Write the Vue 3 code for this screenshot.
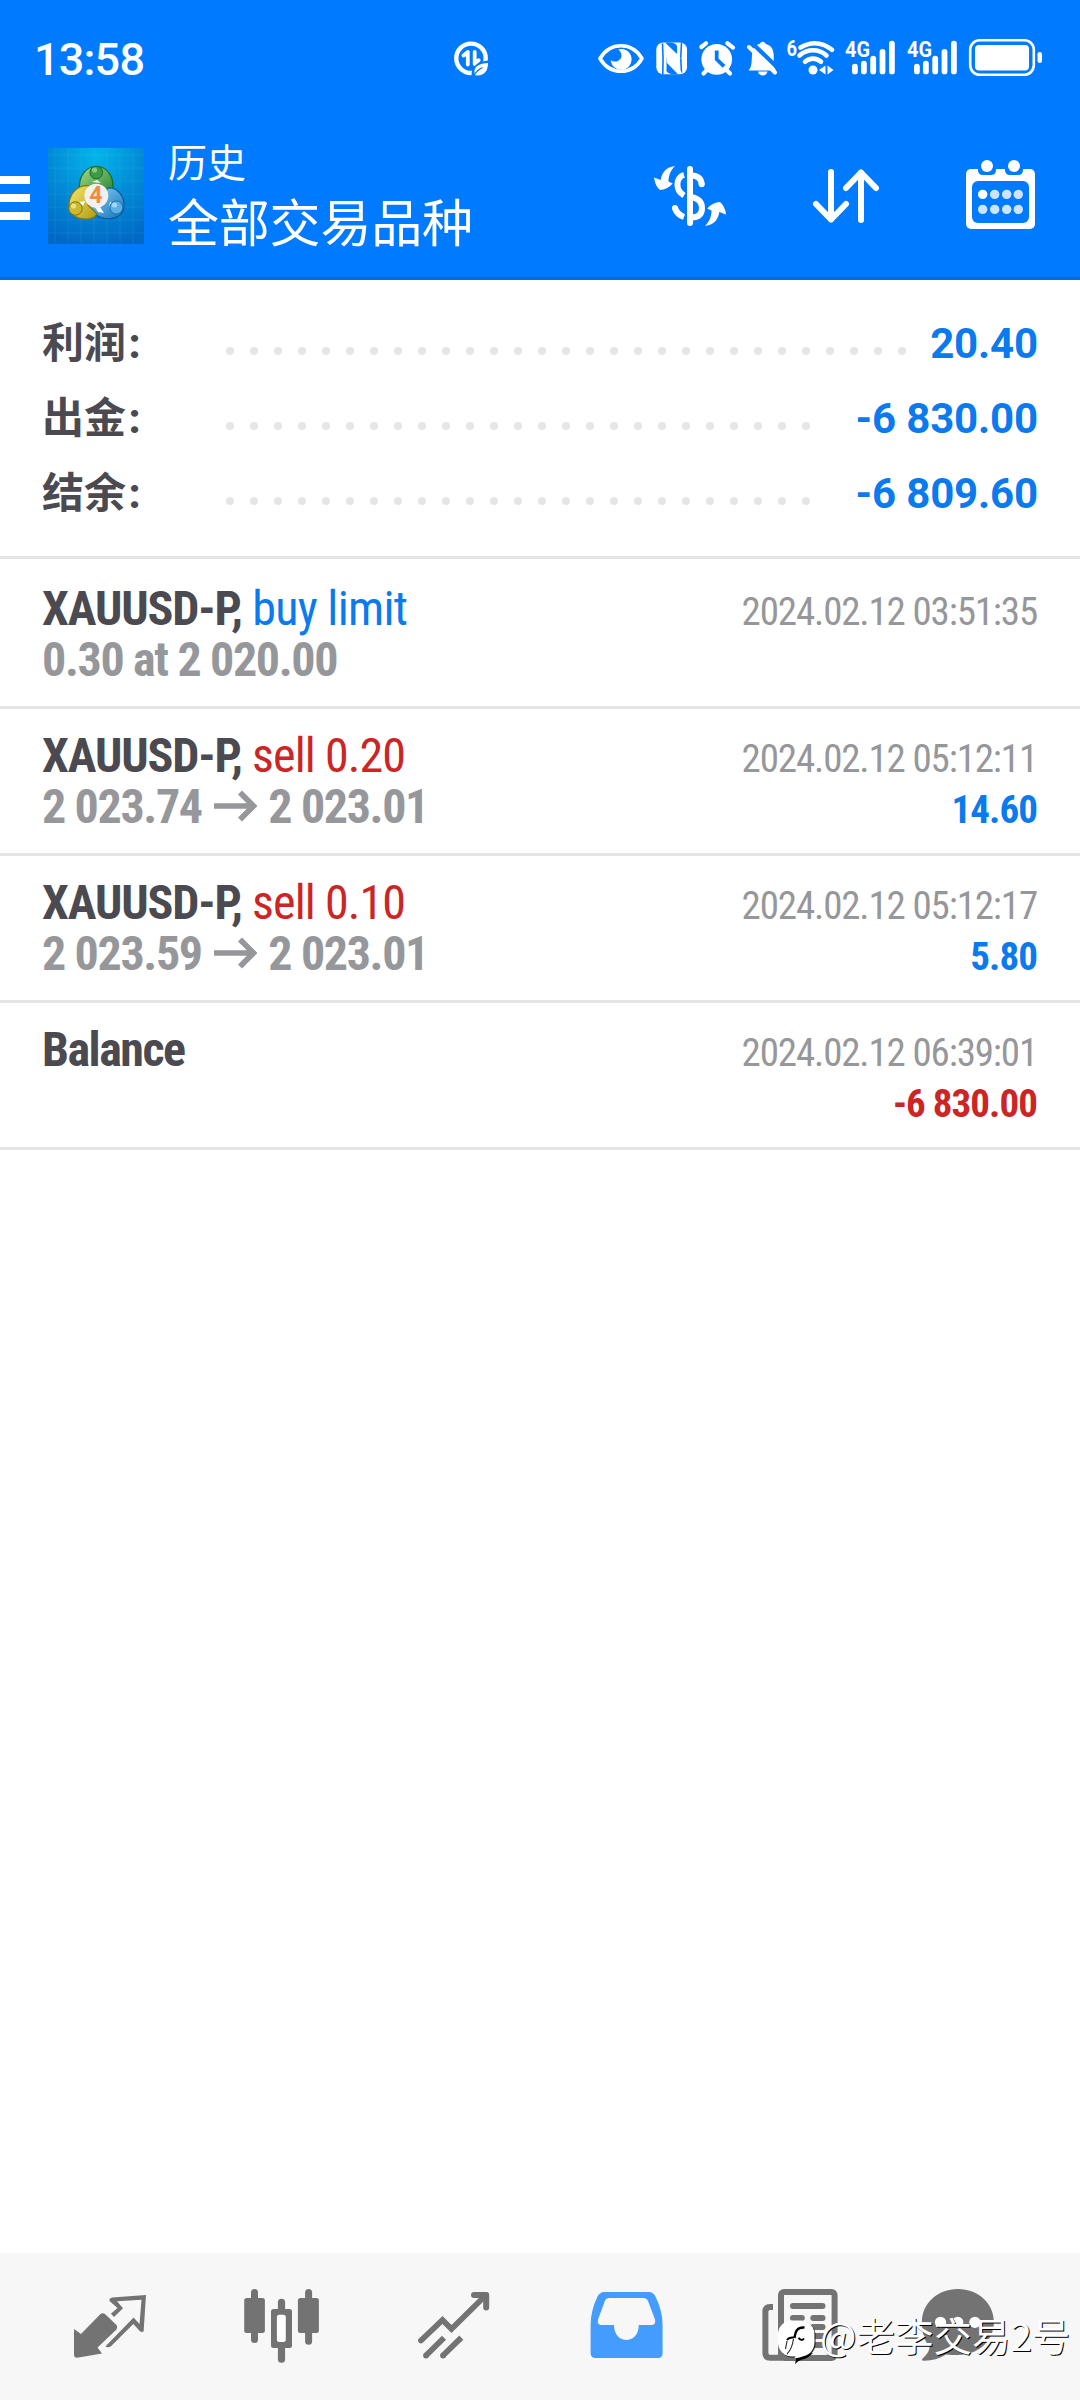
<script setup>
const summary = [
  { label: '利润', value: '20.40', dots: 29 },
  { label: '出金', value: '-6 830.00', dots: 25 },
  { label: '结余', value: '-6 809.60', dots: 25 },
]

const deals = [
  { symbol: 'XAUUSD-P,', action: 'buy limit', side: 'buy', from: '0.30 at 2 020.00', time: '2024.02.12 03:51:35' },
  { symbol: 'XAUUSD-P,', action: 'sell 0.20', side: 'sell', from: '2 023.74', to: '2 023.01', time: '2024.02.12 05:12:11', profit: '14.60' },
  { symbol: 'XAUUSD-P,', action: 'sell 0.10', side: 'sell', from: '2 023.59', to: '2 023.01', time: '2024.02.12 05:12:17', profit: '5.80' },
  { symbol: 'Balance', plain: true, time: '2024.02.12 06:39:01', profit: '-6 830.00', loss: true },
]

const bars = [
  { x: 852, y: 63.7 },
  { x: 861, y: 60.7 },
  { x: 870.3, y: 55.7 },
  { x: 879.6, y: 49 },
  { x: 889, y: 40.7 },
]

const calendarDots = [22.7, 34.7, 46.7, 58.3]
</script>

<template>
  <div class="screen">
    <header class="top">
      <div class="status">
        <span class="clock">13:58</span>
        <svg class="saver" width="36" height="36" viewBox="453 40 36 36">
          <circle cx="471" cy="58.3" r="14.7" fill="none" stroke="#fff" stroke-width="4.4" />
          <path d="M463.5 55.5 L467.8 52 V64.5 M474.7 52 V64 L478.7 60.2" fill="none" stroke="#fff" stroke-width="3.8" stroke-linecap="round" stroke-linejoin="round" />
          <path d="M471.500 78 C470.500 66 478 60.500 491 60.500 V78 Z" fill="#007aff" />
          <path d="M475 75.300 C472.500 67 478 63.800 488 63 C488 71 484 76.500 475 75.300Z" fill="#fff" />
          <path d="M474 75.500 Q477 70 482.500 67.500" fill="none" stroke="#007aff" stroke-width="1.300" />
        </svg>
        <svg class="tray" width="450" height="46" viewBox="596 35 450 46">
          <path d="M600 58.500 C610 41.500 632 41.500 642 58.500 C632 75.500 610 75.500 600 58.500Z" fill="none" stroke="#fff" stroke-width="3.600" stroke-linejoin="round" />
          <path d="M618 49.500 A10.400 10.400 0 1 1 610.800 60 C614 63 621 61.500 621.500 56 C621.500 53 620 50.500 618 49.500Z" fill="#fff" />
          <rect x="656.300" y="42.500" width="30.700" height="31.800" rx="7" fill="#fff" />
          <path d="M662.500 43.500 Q663.500 58 662.800 74 M681.500 42.500 Q680 58 681.500 73" fill="none" stroke="#007aff" stroke-width="1.600" />
          <path d="M666.500 55.500 V71 Q667.500 73.500 672.500 74.300 L678 74.300 L667 63Z M665 42.500 L677 54 V46 Q676 43 671 42.500Z" fill="#007aff" />
          <path d="M664.500 44 L680 59 M664.500 52 L681 73" stroke="#fff" stroke-width="2" />
          <circle cx="716.700" cy="59.300" r="15.400" fill="#fff" />
          <path d="M701.300 47 L706 43.300 M727.300 43.300 L733 47.600 M703.500 73.500 L709 68 M730 73.500 L724.500 68" stroke="#fff" stroke-width="4.200" stroke-linecap="round" />
          <path d="M716.700 50.500 V59.300 L724 66.300" fill="none" stroke="#007aff" stroke-width="3.800" />
          <path d="M748.500 70.500 C752 66.500 751.500 62 752 55 C752.500 48 756 44.500 759.500 44 Q762.700 39.500 766 44 C771 45.500 773.500 49 773.700 55 V66 L776 70.500Z" fill="#fff" />
          <path d="M758 71.500 H767.500 Q766.500 75.500 762.700 75.500 Q759 75.500 758 71.500Z" fill="#fff" />
          <path d="M752 43 L780 70" stroke="#007aff" stroke-width="4.200" />
          <path d="M749 47 L775 72.500" stroke="#fff" stroke-width="4" stroke-linecap="round" />
          <text x="786.500" y="56" class="tray-text" textLength="10.500" lengthAdjust="spacingAndGlyphs">6</text>
          <circle cx="813" cy="70" r="4.500" fill="#fff" />
          <path d="M805 61.800 A11.700 11.700 0 0 1 821 61.800 M799.500 55.500 A20 20 0 0 1 826.500 55.500 M800.500 47.500 Q817 38 832 49.800" fill="none" stroke="#fff" stroke-width="4.600" stroke-linecap="round" />
          <path d="M825.500 65.500 V74.500 L819 70Z M827.500 65.500 V74.500 L833.500 70Z" fill="#fff" />
          <g v-for="shift in [0, 62]" :key="shift" :transform="`translate(${shift} 0)`">
            <text x="845" y="57" class="tray-text" textLength="25" lengthAdjust="spacingAndGlyphs">4G</text>
            <rect v-for="bar in bars" :key="bar.x" :x="bar.x" :y="bar.y" width="5.800" :height="74.300 - bar.y" rx="2.900" fill="#fff" />
          </g>
          <rect x="970.200" y="40.200" width="63.600" height="34.600" rx="9.500" fill="none" stroke="#fff" stroke-width="2.600" />
          <rect x="975" y="45" width="54" height="25.500" rx="4" fill="#fff" />
          <rect x="1037.500" y="52" width="4.500" height="11" rx="2.200" fill="#fff" />
        </svg>
      </div>

      <div class="toolbar">
        <div class="menu"><i></i><i></i><i></i></div>
        <svg class="logo" width="96" height="96" viewBox="0 0 96 96">
          <defs>
            <radialGradient id="sky" cx="50%" cy="8%" r="95%">
              <stop offset="0" stop-color="#04b5ea" />
              <stop offset=".5" stop-color="#028bd5" />
              <stop offset="1" stop-color="#0268c6" />
            </radialGradient>
            <linearGradient id="green" x1="0" y1="0" x2="1" y2="1">
              <stop offset="0" stop-color="#a4dc8a" /><stop offset="1" stop-color="#21802c" />
            </linearGradient>
            <linearGradient id="gold" x1="0" y1="0" x2="1" y2="1">
              <stop offset="0" stop-color="#f4ea6a" /><stop offset="1" stop-color="#b39a14" />
            </linearGradient>
            <linearGradient id="azure" x1="0" y1="0" x2="1" y2="1">
              <stop offset="0" stop-color="#8fd4f6" /><stop offset="1" stop-color="#1273ba" />
            </linearGradient>
          </defs>
          <rect width="96" height="96" fill="url(#sky)" />
          <path d="M7 0V96M20 0V96M33 0V96M46 0V96M59 0V96M72 0V96M85 0V96M0 7H96M0 20H96M0 33H96M0 46H96M0 59H96M0 72H96M0 85H96" stroke="#5cc4f0" stroke-opacity=".14" stroke-width="1" />
          <path d="M31.500 43 C30 28 38 18.500 48.500 18.500 C60 18.500 67 30 64.500 44 L57 49 H40Z" fill="url(#green)" stroke="#17692a" stroke-width="1.200" />
          <path d="M60 40 C70 39 77 49 76 59 C75 70 62 73 52 69 C44 66 41 61 40 58 L52 52Z" fill="url(#azure)" stroke="#075c9e" stroke-width="1.200" />
          <path d="M42 38 C30 36 22 45 21 56 C20 66 28 71 38 71 Q46 71 49 66 L40 57Z" fill="url(#gold)" stroke="#84750e" stroke-width="1.200" />
          <path d="M46 58 L52 59 L56 65 L50 64Z M35 58 L31 54 L37 53Z M62 54 L66 56 L61 59Z M44 34 L49 32 L53 35Z" fill="#f2fbff" />
          <circle cx="48.300" cy="24.500" r="6.300" fill="#3f9a45" stroke="#1c6b2a" />
          <circle cx="27.500" cy="60.500" r="6.700" fill="#cbb930" stroke="#83720d" />
          <circle cx="68.300" cy="59.500" r="6.500" fill="#58b0e6" stroke="#1b6fae" />
          <circle cx="46.500" cy="22" r="2.600" fill="#a9dba0" opacity=".7" />
          <circle cx="25.500" cy="58" r="2.600" fill="#f6ef9a" opacity=".7" />
          <circle cx="66.500" cy="57" r="2.600" fill="#c5e7fa" opacity=".7" />
          <circle cx="48.300" cy="47.700" r="12" fill="#f3f1ef" />
          <text x="47.800" y="55.300" class="logo-text" text-anchor="middle">4</text>
        </svg>
        <div class="titles">
          <div class="subtitle">历史</div>
          <div class="title">全部交易品种</div>
        </div>
        <svg width="84" height="72" viewBox="0 0 84 72">
          <g fill="#fff">
            <rect x="39" y="6" width="6" height="60" rx="3" />
            <path d="M27 6 C17 7 13.500 14 12.700 20 L6 17.500 Q7 26 12 30 Q19 30 24.700 23.500 L20.500 21.500 C20.500 15 23 10 27 6Z" />
            <path d="M27 6 C17 7 13.500 14 12.700 20 L6 17.500 Q7 26 12 30 Q19 30 24.700 23.500 L20.500 21.500 C20.500 15 23 10 27 6Z" transform="rotate(180 42 36)" />
          </g>
          <g fill="none" stroke="#fff" stroke-width="6">
            <path d="M36 14.800 C28 17 26.500 30 36 35.500 M36 57 Q29 54.500 27 48" />
            <path d="M44 15.500 Q53 16 53.700 24.300 M44 37.200 Q54 39.500 54 48 Q54 57 44 57.500" />
          </g>
          <circle cx="53.700" cy="24.300" r="3" fill="#fff" /><circle cx="27" cy="48" r="3" fill="#fff" />
        </svg>
        <svg class="sort" width="78" height="66" viewBox="0 0 78 66">
          <path d="M24 9 V56.500 M9 41 L24 56.500 L39 41 M54 57 V9.500 M39 25 L54 9.500 L69 25" fill="none" stroke="#fff" stroke-width="6" stroke-linecap="round" stroke-linejoin="round" />
        </svg>
        <svg class="calendar" width="81" height="81" viewBox="0 0 81 81">
          <rect x="6" y="15" width="69" height="60" rx="5" fill="#fff" />
          <rect x="12" y="27" width="57" height="42" rx="6" fill="#007aff" />
          <g v-for="x in [27, 54]" :key="x">
            <path :d="`M${x - 9} 12 h18 v4 q0 5 -5 5 h-8 q-5 0 -5 -5Z`" fill="#007aff" />
            <circle :cx="x" cy="12" r="6" fill="#fff" />
          </g>
          <g v-for="(x, i) in calendarDots" :key="x">
            <circle :cx="x" cy="40.400" r="4.700" :fill="i ? '#cce4ff' : '#fff'" />
            <circle :cx="x" cy="55.400" r="4.700" fill="#cce4ff" />
          </g>
        </svg>
      </div>
    </header>

    <section class="summary">
      <div v-for="row in summary" :key="row.label" class="sum-row">
        <span class="sum-label">{{ row.label }}<span class="colon">:</span></span>
        <span class="leader"><i v-for="n in row.dots" :key="n"></i></span>
        <span class="sum-value">{{ row.value }}</span>
      </div>
    </section>

    <main class="deals">
      <article v-for="deal in deals" :key="deal.time" class="deal">
        <div class="left">
          <div class="line" :class="{ plain: deal.plain }"><b>{{ deal.symbol }}</b><span v-if="deal.action" :class="deal.side">{{ ' ' + deal.action }}</span></div>
          <div v-if="deal.from" class="line prices">
            <span>{{ deal.from }}</span>
            <template v-if="deal.to">
              <svg width="43" height="32" viewBox="0 0 43 32"><path d="M0 16 H39 M26 2.500 L39.500 16 L26 29.500" fill="none" stroke="#96979b" stroke-width="5.700" /></svg>
              <span>{{ deal.to }}</span>
            </template>
          </div>
        </div>
        <div class="right">
          <div class="time">{{ deal.time }}</div>
          <div v-if="deal.profit" class="profit" :class="{ loss: deal.loss }">{{ deal.profit }}</div>
        </div>
      </article>
    </main>

    <nav class="tabs">
      <svg width="172" height="147" viewBox="0 0 172 147" fill="#737373">
        <path d="M50 76 L57 81 L76.500 61 Q79 59.300 81.500 61.500 L92.500 72 Q94 74 92.500 76.500 L73.500 94.500 L78 100.500 L53 104.700 Q50 104.700 50 101.500Z" />
        <path d="M85.500 46.300 Q86 45 88 44.500 L122 42 L119.600 78.700 H116.500 L109.300 71 L87 93.200 Q84 95 81.400 93.500 L109.600 64.500 L115.500 71 L117.500 46.700 L93 48.300 L99 55.300 L90 64 L86.900 60.700 L93.500 55 L85.500 48Z" />
      </svg>
      <svg width="172" height="147" viewBox="0 0 172 147" fill="#737373">
        <rect x="55" y="36" width="7" height="54" rx="3.500" />
        <rect x="48.200" y="45" width="20.700" height="35" rx="2.500" />
        <rect x="81.900" y="45.700" width="7.200" height="64" rx="3.500" />
        <rect x="75" y="56" width="21" height="39" rx="2.500" />
        <rect x="80.900" y="61.700" width="8.900" height="27.300" rx="2.500" fill="#fff" />
        <rect x="109.100" y="36" width="7" height="55.700" rx="3.500" />
        <rect x="101.900" y="45" width="21" height="35" rx="2.500" />
      </svg>
      <svg width="172" height="147" viewBox="0 0 172 147" fill="none" stroke="#737373" stroke-width="5.800">
        <path d="M53 87.500 L74.500 67 L83.500 76 L118 42" stroke-linecap="round" />
        <path d="M106 42 H118.200 V54.500" stroke-width="6" stroke-linecap="round" stroke-linejoin="round" />
        <path d="M58 102.500 L76 84.700 M75 102.500 L93.300 84.700" />
        <path d="M58 102.500 h.01 M75 102.500 h.01" stroke-linecap="round" />
      </svg>
      <svg width="172" height="147" viewBox="0 0 172 147">
        <path fill-rule="evenodd" fill="#449cff" d="M64 39 H109 Q113 39 115.500 43.500 Q122.600 58 122.600 72 V100 Q122.600 105 118 105 H55.500 Q50.600 105 50.600 100 V72 Q50.600 58 57.500 43.500 Q60 39 64 39Z M69.500 45 Q66 45 64.800 48 L58 66.500 Q57 71.700 61 72 H74 C74 92 98.800 92 98.800 72 H112 Q116 71.700 115 66.500 L108 48 Q106.800 45 103 45Z" />
      </svg>
      <svg width="172" height="147" viewBox="0 0 172 147" fill="none" stroke="#737373" stroke-width="6">
        <rect x="69" y="39" width="53.600" height="66" rx="3" />
        <path d="M61 54 H58 Q53.400 54 53.400 58.500 V100 Q53.400 104.800 58 104.800 H70" />
        <path d="M81 53 H110.500 M101.300 65 H110.500 M101.300 74 H110.500 M81 65 H89.800 M81 74 H89.800 M81 83 H110.500 M81 92 H110.500" stroke-linecap="round" />
      </svg>
      <svg width="172" height="147" viewBox="0 0 172 147" fill="#737373">
        <path d="M73.900 36 C94 36 109.900 50 109.900 69 C109.900 88 94 102 73.900 102 Q68 102 62 101.500 Q52 108 39 107.700 Q37 107 39 105 Q46 99 45.500 93 C40 88 37.900 79 37.900 69 C37.900 50 54 36 73.900 36Z" />
        <g fill="#fff"><circle cx="56.500" cy="69.300" r="5.600" /><circle cx="73.700" cy="69.300" r="5.600" /><circle cx="90.900" cy="69.300" r="5.600" /></g>
      </svg>
      <div class="watermark">
        <svg width="40" height="48" viewBox="0 0 40 48">
          <rect x="2" y="4.500" width="36.500" height="36" rx="14" fill="#000" opacity=".85" />
          <path d="M18 47 Q19 42 20 39 L36 36 Q30 42 25 42.500 Q21 43.500 18 47Z" fill="#000" />
          <rect x="1" y="3.500" width="36.500" height="36" rx="14" fill="#fff" />
          <path d="M17.500 41 L20 37 L28 38 Q24 40.500 20.500 41Z" fill="#fff" />
          <path d="M27.500 10.500 C20.500 9.800 18.500 14 17.500 21" fill="none" stroke="#000" stroke-width="2.400" />
          <path d="M10 23 Q12 20 17 20.500 M21.500 21 Q25 24.500 27 21.500" fill="none" stroke="#000" stroke-width="2" />
          <path d="M10 24 L8.500 32 M16.500 22 Q15 32 10 37" fill="none" stroke="#333" stroke-width="1.200" />
        </svg>
        <span>@老李交易2号</span>
      </div>
    </nav>
  </div>
</template>

<style>
body {
  margin: 0;
  background: #fff;
}
</style>

<style scoped>
.screen {
  width: 1080px;
  height: 2400px;
  display: flex;
  flex-direction: column;
  overflow: hidden;
  background: #fff;
  font-family: Roboto, "Noto Sans CJK SC", sans-serif;
}
svg {
  display: block;
  flex: none;
}
.top {
  box-sizing: border-box;
  height: 280px;
  background: #007aff;
  border-bottom: 3px solid #0a6cdc;
  color: #fff;
}
.status {
  display: flex;
  height: 130px;
}
.clock {
  width: 419px;
  padding-left: 34px;
  padding-top: 33px;
  font-size: 45px;
  line-height: 54px;
  font-weight: 500;
  font-stretch: 90%;
  letter-spacing: -0.800px;
}
.saver {
  margin-top: 40px;
}
.tray {
  margin: 35px 0 0 107px;
}
.tray-text {
  font: 700 22.500px Roboto, sans-serif;
  fill: #fff;
}
.toolbar {
  display: flex;
}
.menu {
  display: flex;
  flex-direction: column;
  gap: 10px;
  width: 30px;
  padding-top: 46px;
}
.menu i {
  height: 8px;
  background: #fff;
}
.logo {
  margin: 18px 0 0 18px;
}
.logo-text {
  font: 700 23px Roboto, sans-serif;
  fill: #f58a3c;
}
.titles {
  width: 480px;
  padding-left: 24px;
  font-family: "Noto Sans CJK SC", sans-serif;
  line-height: 60px;
}
.subtitle {
  height: 60px;
  font-size: 39px;
}
.title {
  height: 60px;
  font-size: 51px;
  letter-spacing: -0.200px;
}
.titles + svg {
  margin-top: 30px;
}
.sort {
  margin: 33px 0 0 75px;
}
.calendar {
  margin: 24px 0 0 75px;
}
.summary {
  padding: 26px 42px 25px 42px;
  border-bottom: 3px solid #e5e5e5;
  font-size: 42px;
  font-weight: 700;
  line-height: 75px;
}
.sum-row {
  display: flex;
  height: 75px;
}
.sum-label {
  width: 184px;
  color: #4a4a50;
}
.colon {
  margin-left: 2.500px;
  font-weight: 800;
}
.leader {
  flex: 1;
  display: flex;
  gap: 16px;
  padding-top: 41px;
}
.leader i {
  flex: none;
  width: 8px;
  height: 8px;
  border-radius: 50%;
  background: #e5e5e5;
}
.sum-value {
  color: #0a7aee;
  letter-spacing: -0.150px;
}
.deals {
  flex: 1;
  padding-top: 3px;
}
.deal {
  box-sizing: border-box;
  display: flex;
  justify-content: space-between;
  height: 147px;
  padding: 21px 43px 0 42px;
  border-bottom: 3px solid #e5e5e5;
  line-height: 51px;
  font-stretch: 75%;
}
.line {
  height: 51px;
  font-size: 48px;
  letter-spacing: -1.100px;
  white-space: pre;
  color: #4a4a50;
}
.line.plain {
  letter-spacing: -1.500px;
}
.line .buy {
  color: #0a7aee;
  letter-spacing: -0.700px;
}
.line .sell {
  color: #cc2525;
  letter-spacing: -0.900px;
}
.prices {
  display: flex;
  font-weight: 700;
  letter-spacing: -1.350px;
  color: #96979b;
}
.prices svg {
  margin: 9px 11px 0 12.500px;
}
.right {
  padding-top: 4px;
  text-align: right;
  font-size: 39px;
}
.time {
  height: 51px;
  letter-spacing: -1.150px;
  color: #96979b;
}
.profit {
  font-weight: 700;
  letter-spacing: -0.950px;
  color: #0a7aee;
}
.profit.loss {
  color: #cc2525;
}
.tabs {
  position: relative;
  display: flex;
  height: 147px;
  padding-left: 24px;
  background: #f7f7f7;
}
.watermark {
  position: absolute;
  left: 777px;
  top: 64px;
  display: flex;
  white-space: nowrap;
  font: 400 38.500px/40px "Noto Sans CJK SC", sans-serif;
  color: #fff;
  text-shadow: 1px 1px 0.500px #000;
}
.watermark span {
  margin: -3px 0 0 3px;
}
</style>
